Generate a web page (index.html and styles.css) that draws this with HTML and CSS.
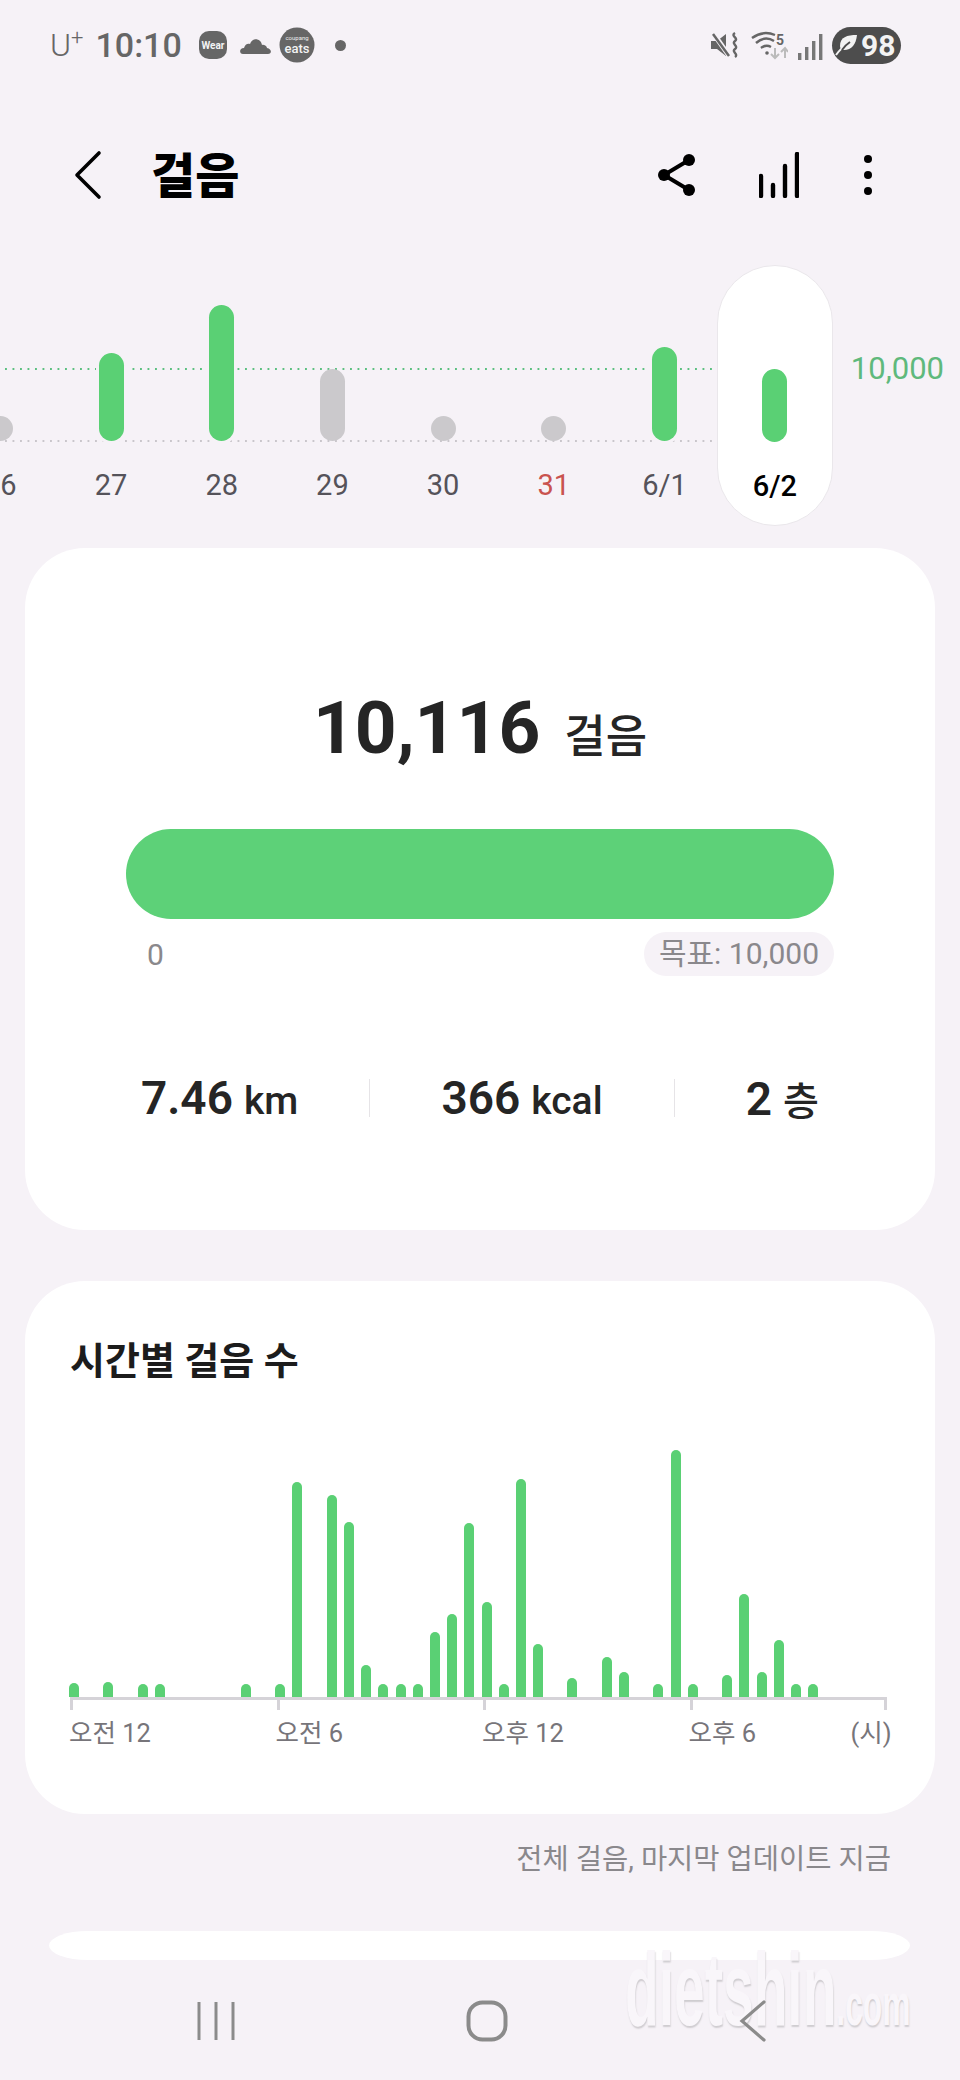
FILE: index.html
```html
<!DOCTYPE html>
<html lang="ko">
    <head>
        <meta charset="UTF-8" />
        <meta name="viewport" content="width=device-width, initial-scale=1.0" />
        <title>걸음</title>
        <link rel="stylesheet" href="styles.css">
    </head>

    <body>
        <div id="page">
            <!-- 상태바 -->
            <div class="status">
                <span class="carrier">U<sup>+</sup></span>
                <span class="clock">10:10</span>
                <svg class="st-wear" width="30" height="30" viewBox="0 0 30 30">
                    <rect x="1" y="1" width="28" height="28" rx="10" fill="#666"/>
                    <text x="15" y="19" class="st-text" font-size="10" font-weight="700" text-anchor="middle" fill="#f3f3f3">Wear</text>
                </svg>
                <svg class="st-cloud" width="33" height="20" viewBox="0 0 33 20">
                    <path d="M4 19 C0 19 0 13 5 13 C6 9 9 8 11 9 C13 2 22 3 23 10 C26 9 28 12 28 13 C33 14 33 19 29 19 Z" fill="#666"/>
                </svg>
                <svg class="st-eats" width="36" height="36" viewBox="0 0 36 36">
                    <circle cx="18" cy="18" r="17.5" fill="#666"/>
                    <text x="18" y="13" class="st-text" font-size="6" text-anchor="middle" fill="#eee">coupang</text>
                    <text x="18" y="26" class="st-text" font-size="13" font-weight="500" text-anchor="middle" fill="#f3f3f3">eats</text>
                </svg>
                <i class="st-dot"></i>

                <div class="status-right">
                    <svg width="28" height="26" viewBox="0 0 28 26">
                        <path d="M0 9 H6 L15 2 V24 L6 17 H0 Z" fill="#666"/>
                        <path d="M2 1 L19 25" stroke="#f6f2f7" stroke-width="5"/>
                        <path d="M2 2 L18 24" stroke="#666" stroke-width="2.5"/>
                        <path d="M24 1 c-5 3 4 5 0 8 s4 5 0 8 s4 5 0 8" fill="none" stroke="#666" stroke-width="2.4"/>
                    </svg>
                    <svg class="st-wifi" width="38" height="30" viewBox="0 0 38 30">
                        <circle cx="17" cy="23" r="1.8" fill="#666"/>
                        <path d="M11 18 Q16 14 21 17" fill="none" stroke="#666" stroke-width="2.4"/>
                        <path d="M6 13 Q15 5 24 11" fill="none" stroke="#666" stroke-width="2.4"/>
                        <path d="M2 8 Q13 0 25 5" fill="none" stroke="#666" stroke-width="2.4"/>
                        <text x="26" y="15" class="st-text" font-size="14" font-weight="700" fill="#666">5</text>
                        <path d="M25 18 V27 M21 24 L25 28 L29 24" fill="none" stroke="#bbb" stroke-width="2"/>
                        <path d="M35 28 V19 M31 22 L35 18 L38 22" fill="none" stroke="#bbb" stroke-width="2"/>
                    </svg>
                    <svg class="st-signal" width="25" height="26" viewBox="0 0 25 26">
                        <rect x="0" y="19" width="3.4" height="7" fill="#777"/>
                        <rect x="7" y="13" width="3.4" height="13" fill="#777"/>
                        <rect x="14" y="7" width="3.4" height="19" fill="#777"/>
                        <rect x="21" y="0" width="3.4" height="26" fill="#777"/>
                    </svg>
                    <div class="battery">
                        <svg width="23" height="22" viewBox="0 0 23 22">
                            <path d="M22 1 C12 1 5 3 5 12 C5 14 6 15 7 16 C16 17 21 11 22 1 Z" fill="#f3f3f3"/>
                            <path d="M1 21 C5 15 9 12 15 8" fill="none" stroke="#f3f3f3" stroke-width="2"/>
                            <path d="M7 16 C9 13 12 10 15 8" fill="none" stroke="#4d4d4d" stroke-width="2"/>
                        </svg>
                        <span>98</span>
                    </div>
                </div>
            </div>

            <!-- 상단 타이틀 -->
            <div class="appbar">
                <svg class="back" width="28" height="50" viewBox="0 0 28 50">
                    <path d="M25 3 L3 25 L25 47" fill="none" stroke="#000" stroke-width="3.6" stroke-linecap="round" stroke-linejoin="round"/>
                </svg>
                <h1>걸음</h1>
                <svg class="share" width="40" height="44" viewBox="0 0 40 44">
                    <path d="M31 7 L6 22 L31 37" fill="none" stroke="#000" stroke-width="4"/>
                    <circle cx="31" cy="7" r="6" fill="#000"/>
                    <circle cx="6" cy="22" r="6" fill="#000"/>
                    <circle cx="31" cy="37" r="6" fill="#000"/>
                </svg>
                <svg class="levels" width="40" height="46" viewBox="0 0 40 46">
                    <path d="M2 24 V44 M14 33 V44 M26 14 V44 M38 2 V44" fill="none" stroke="#000" stroke-width="4.4" stroke-linecap="round"/>
                </svg>
                <svg class="more" width="12" height="44" viewBox="0 0 12 44">
                    <circle cx="6" cy="6" r="4" fill="#000"/>
                    <circle cx="6" cy="22" r="4" fill="#000"/>
                    <circle cx="6" cy="38" r="4" fill="#000"/>
                </svg>
            </div>

            <!-- 날짜별 걸음 -->
            <div class="days">
                <div class="line line-goal"></div>
                <div class="line line-zero"></div>
                <div class="day"><div class="plot"><i class="pin off"></i></div><span>26</span></div>
                <div class="day"><div class="plot"><i class="pin over" style="height:88px"></i></div><span>27</span></div>
                <div class="day"><div class="plot"><i class="pin over" style="height:136px"></i></div><span>28</span></div>
                <div class="day"><div class="plot"><i class="pin off" style="height:72px"></i></div><span>29</span></div>
                <div class="day"><div class="plot"><i class="pin off"></i></div><span>30</span></div>
                <div class="day"><div class="plot"><i class="pin off"></i></div><span class="sun">31</span></div>
                <div class="day"><div class="plot"><i class="pin over" style="height:94px"></i></div><span>6/1</span></div>
                <div class="day today"><div class="plot"><i class="pin" style="height:73px"></i></div><span>6/2</span></div>
                <div class="goal-label">10,000</div>
            </div>

            <!-- 오늘 요약 -->
            <div class="card summary">
                <div class="steps"><strong>10,116</strong><span>걸음</span></div>
                <div class="progress"></div>
                <div class="scale">
                    <span>0</span>
                    <span class="target">목표: 10,000</span>
                </div>
                <div class="stats">
                    <div class="stat"><b>7.46</b> <span>km</span></div>
                    <i class="sep"></i>
                    <div class="stat"><b>366</b> <span>kcal</span></div>
                    <i class="sep"></i>
                    <div class="stat"><b>2</b> <span>층</span></div>
                </div>
            </div>

            <!-- 시간별 그래프 -->
            <div class="card hourly">
                <h2>시간별 걸음 수</h2>
                <div class="bars">
                    <i style="height:14px"></i><i class="gap"></i><i style="height:15px"></i><i class="gap"></i>
                    <i style="height:13px"></i><i style="height:13px"></i><i class="gap"></i><i class="gap"></i>
                    <i class="gap"></i><i class="gap"></i><i style="height:13px"></i><i class="gap"></i>
                    <i style="height:13px"></i><i style="height:215px"></i><i class="gap"></i><i style="height:202px"></i>
                    <i style="height:175px"></i><i style="height:32px"></i><i style="height:13px"></i><i style="height:13px"></i>
                    <i style="height:13px"></i><i style="height:65px"></i><i style="height:83px"></i><i style="height:174px"></i>
                    <i style="height:95px"></i><i style="height:13px"></i><i style="height:218px"></i><i style="height:53px"></i>
                    <i class="gap"></i><i style="height:19px"></i><i class="gap"></i><i style="height:40px"></i>
                    <i style="height:25px"></i><i class="gap"></i><i style="height:13px"></i><i style="height:247px"></i>
                    <i style="height:13px"></i><i class="gap"></i><i style="height:22px"></i><i style="height:103px"></i>
                    <i style="height:25px"></i><i style="height:57px"></i><i style="height:13px"></i><i style="height:13px"></i>
                </div>
                <div class="ticks"><i></i><i></i><i></i><i></i></div>
                <div class="hours">
                    <span>오전 12</span>
                    <span>오전 6</span>
                    <span>오후 12</span>
                    <span>오후 6</span>
                    <span class="unit">(시)</span>
                </div>
            </div>

            <p class="updated">전체 걸음, 마지막 업데이트 지금</p>

            <div class="next-card"></div>

            <div class="watermark"><span>dietshin</span><small>.com</small></div>

            <!-- 하단 내비게이션 -->
            <div class="nav">
                <svg width="38" height="40" viewBox="0 0 38 40">
                    <path d="M2 1 V39 M19 1 V39 M36 1 V39" stroke="#8b8b8b" stroke-width="3"/>
                </svg>
                <svg width="42" height="42" viewBox="0 0 42 42">
                    <rect x="2.5" y="2.5" width="37" height="37" rx="14" fill="none" stroke="#8b8b8b" stroke-width="4"/>
                </svg>
                <svg width="28" height="42" viewBox="0 0 28 42">
                    <path d="M25 2 L3 21 L25 40" fill="none" stroke="#8b8b8b" stroke-width="3.2" stroke-linecap="round"/>
                </svg>
            </div>
        </div>
    </body>
</html>
```

FILE: styles.css
```css
html,
body {
    margin: 0;
    padding: 0;
    overflow: hidden;
}

body {
    background: #f6f2f7;
    font-family: Roboto, "Noto Sans CJK KR", sans-serif;
    color: #252525;
}

h1,
h2,
p {
    margin: 0;
    padding: 0;
}

i {
    display: block;
}

#page {
    position: relative;
    width: 960px;
    height: 2080px;
    overflow: hidden;
}

/* status bar */
.status {
    display: flex;
    align-items: center;
    height: 90px;
    padding: 0 59px 0 50px;
    color: #666;
}

.st-text {
    font-family: Roboto, sans-serif;
}

.carrier {
    font-size: 32px;
    font-weight: 300;
    line-height: 40px;
}

.carrier sup {
    font-size: 22px;
    line-height: 0;
    vertical-align: 11px;
}

.clock {
    margin-left: 12px;
    font-size: 34px;
    font-weight: 500;
    line-height: 40px;
}

.st-wear {
    margin-left: 16px;
}

.st-cloud {
    margin-left: 11px;
}

.st-eats {
    margin-left: 7px;
}

.st-dot {
    width: 11px;
    height: 11px;
    margin-left: 20px;
    border-radius: 50%;
    background: #666;
}

.status-right {
    display: flex;
    align-items: center;
    margin-left: auto;
}

.st-wifi {
    margin-left: 11px;
}

.st-signal {
    margin-left: 10px;
    margin-top: 3px;
}

.battery {
    display: flex;
    align-items: center;
    width: 69px;
    height: 37px;
    margin-left: 9px;
    padding-left: 3px;
    box-sizing: border-box;
    border-radius: 19px;
    background: #4d4d4d;
    color: #f3f3f3;
    font-size: 30px;
    font-weight: 700;
    line-height: 37px;
}

.battery span {
    margin-left: 3px;
}

/* title bar */
.appbar {
    display: flex;
    align-items: center;
    height: 90px;
    margin-top: 40px;
    padding: 0 86px 0 74px;
}

h1 {
    flex: 1;
    margin-left: 49px;
    padding-top: 3px;
    font-size: 48px;
    font-weight: 900;
    line-height: 60px;
    color: #000;
}

.levels {
    margin-left: 61px;
    margin-top: -1px;
}

.more {
    margin-left: 63px;
}

/* day strip */
.days {
    position: relative;
    display: flex;
    height: 261px;
    margin-top: 45px;
    margin-left: -55px;
}

.line {
    position: absolute;
    left: 0;
    width: 772px;
    height: 2px;
    background-size: 7.5px 2px;
}

.line-goal {
    top: 103px;
    background-image: linear-gradient(90deg, #5cc080 2px, transparent 2px);
}

.line-zero {
    top: 175px;
    background-image: linear-gradient(90deg, #c9c6cb 2px, transparent 2px);
}

.day {
    position: relative;
    display: flex;
    flex-direction: column;
    align-items: center;
    flex: 0 0 110.7px;
    color: #55535a;
    font-size: 29px;
}

.day span {
    margin-top: 24px;
    line-height: 40px;
}

.day .sun {
    color: #c9534f;
}

.plot {
    display: flex;
    align-items: flex-end;
    height: 176px;
}

.pin {
    width: 25px;
    height: 25px;
    border-radius: 13px;
    background: #5ad074;
}

.pin.off {
    background: #cbc9cc;
}

.pin.over {
    box-shadow: 0 0 0 3px #f6f2f7;
}

.today {
    flex-basis: 116px;
    margin-left: -3px;
    box-sizing: border-box;
    border: 1px solid #eae7eb;
    border-radius: 58px;
    background: #fff;
    color: #000;
}

.today span {
    font-weight: 500;
}

.goal-label {
    margin: 88px 0 0 18px;
    font-size: 31px;
    line-height: 32px;
    color: #5fb97c;
}

/* cards */
.card {
    width: 910px;
    margin-left: 25px;
    box-sizing: border-box;
    border-radius: 60px;
    background: #fff;
}

.summary {
    height: 682px;
    margin-top: 22px;
    padding: 135px 101px 0;
}

.steps {
    display: flex;
    align-items: baseline;
    justify-content: center;
    height: 90px;
    line-height: 90px;
}

.steps strong {
    font-size: 73px;
    font-weight: 700;
}

.steps span {
    margin-left: 24px;
    font-size: 45px;
    font-weight: 500;
}

.progress {
    height: 90px;
    margin-top: 56px;
    border-radius: 45px;
    background: #5dd178;
}

.scale {
    display: flex;
    align-items: center;
    justify-content: space-between;
    height: 44px;
    margin-top: 13px;
    padding-left: 21px;
    font-size: 30px;
    color: #8a888c;
}

.target {
    padding: 0 15px;
    border-radius: 22px;
    background: #f6f2f7;
    line-height: 44px;
}

.stats {
    display: flex;
    align-items: center;
    justify-content: space-between;
    height: 52px;
    margin: 96px 15px 0;
}

.stat b {
    font-size: 46px;
    font-weight: 600;
}

.stat span {
    margin-left: 7px;
    font-size: 39px;
    font-weight: 500;
}

.sep {
    width: 1px;
    height: 38px;
    background: #e6e4e7;
}

.hourly {
    height: 533px;
    margin-top: 51px;
    padding: 58px 48px 0 45px;
}

h2 {
    font-size: 38px;
    font-weight: 700;
    line-height: 44px;
    color: #1c1c1c;
}

.bars {
    display: flex;
    align-items: flex-end;
    gap: 7.2px;
    height: 250px;
    margin: 64px 0 0 -1px;
}

.bars i {
    flex: 0 0 10px;
    border-radius: 5px 5px 0 0;
    background: #5ad074;
}

.bars .gap {
    background: none;
}

.ticks {
    display: grid;
    grid-template-columns: 206.5px 206.5px 206.5px 197.5px;
    height: 13px;
    border-top: 3px solid #d5d3d8;
    box-sizing: border-box;
}

.ticks i {
    border-left: 3px solid #d5d3d8;
}

.ticks i:last-child {
    border-right: 3px solid #d5d3d8;
}

.hours {
    display: grid;
    grid-template-columns: 206.5px 206.5px 206.5px 162px 40px;
    margin: 6px 0 0 -1px;
    font-size: 25.5px;
    line-height: 34px;
    color: #77757a;
}

.hours .unit {
    text-align: right;
}

.updated {
    margin: 28px 69px 0 0;
    text-align: right;
    font-size: 28.5px;
    line-height: 36px;
    color: #8a888c;
}

.next-card {
    height: 29px;
    margin: 53px 50px 0 49px;
    border-radius: 40px / 15px;
    background: #fff;
}

/* navigation */
.nav {
    position: absolute;
    left: 197px;
    top: 2000px;
    display: flex;
    align-items: center;
    width: 570px;
    justify-content: space-between;
}

/* watermark over the nav */
.watermark {
    position: absolute;
    left: 625px;
    top: 1929px;
    transform: scaleX(0.53);
    transform-origin: left top;
    white-space: nowrap;
    font-family: "Liberation Sans", sans-serif;
    font-size: 104px;
    font-weight: 700;
    line-height: 120px;
    color: #f9f6fa;
    text-shadow: 1px 2px 2px #cfccd0;
}

.watermark small {
    font-size: 60px;
}
```
